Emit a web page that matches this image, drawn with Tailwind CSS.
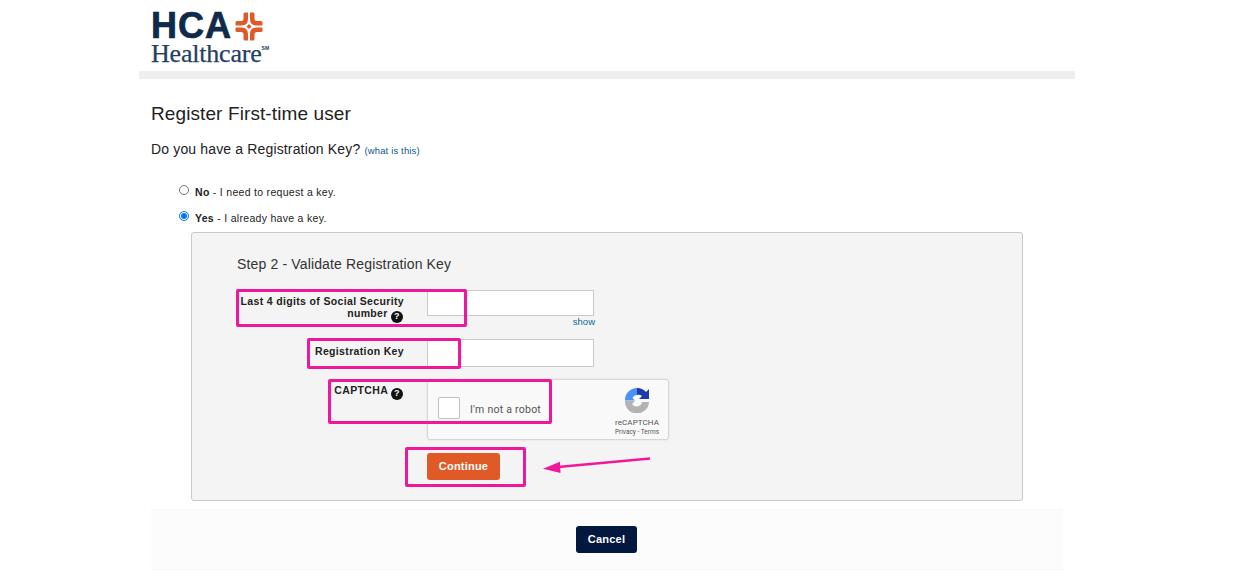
<!DOCTYPE html>
<html lang="en">
<head>
    <meta charset="UTF-8">
    <meta name="viewport" content="width=device-width, initial-scale=1.0">
    <title>Register First-time user - HCA Healthcare</title>
    <script src="https://cdn.jsdelivr.net/npm/@tailwindcss/browser@4"></script>
</head>
<body class="relative bg-white font-['Liberation_Sans',Arial,sans-serif] text-[#222]">
    <div class="ml-[139px] w-[936px]">
        <!-- logo -->
        <header class="h-[71px] pl-3 pt-[9px]">
            <div class="flex items-start h-[34px]">
                <span class="font-bold text-[36px] leading-[34px] tracking-[1px] text-[#0f2a4a] [-webkit-text-stroke:0.7px_#0f2a4a]">HCA</span>
                <svg class="ml-[3px] mt-[3px]" width="28" height="29" viewBox="0 0 28 29" fill="#e0592a">
                    <path d="M8.500 2a1.500 1.500 0 0 1 1.500-1.500h3V7Q13 13.500 6.500 13.500H0.500V10.500a1.500 1.500 0 0 1 1.500-1.500H6Q8.500 9 8.500 6.500z"/>
                    <path d="M8.500 2a1.500 1.500 0 0 1 1.500-1.500h3V7Q13 13.500 6.500 13.500H0.500V10.500a1.500 1.500 0 0 1 1.500-1.500H6Q8.500 9 8.500 6.500z" transform="matrix(-1 0 0 1 28 0)"/>
                    <path d="M8.500 2a1.500 1.500 0 0 1 1.500-1.500h3V7Q13 13.500 6.500 13.500H0.500V10.500a1.500 1.500 0 0 1 1.500-1.500H6Q8.500 9 8.500 6.500z" transform="matrix(1 0 0 -1 0 29)"/>
                    <path d="M8.500 2a1.500 1.500 0 0 1 1.500-1.500h3V7Q13 13.500 6.500 13.500H0.500V10.500a1.500 1.500 0 0 1 1.500-1.500H6Q8.500 9 8.500 6.500z" transform="matrix(-1 0 0 -1 28 29)"/>
                    <path d="M14 12l2.500 2.500-2.500 2.500-2.500-2.500z"/>
                </svg>
            </div>
            <div class="flex items-start">
                <span class="font-['Liberation_Serif',serif] text-[26px] leading-[22px] tracking-[-0.2px] text-[#26405f] [-webkit-text-stroke:0.25px_#26405f]">Healthcare</span>
                <span class="text-[5px] leading-[8px] font-bold text-[#26405f] mt-[1px]">SM</span>
            </div>
        </header>
        <div class="h-2 bg-[#eeeeee]"></div>

        <main class="pl-3 pr-3">
            <h1 class="mt-[23px] text-[19px] leading-[24px] tracking-[0.1px] text-[#222]">Register First-time user</h1>
            <p class="mt-[13px] text-[14px] leading-[20px] tracking-[0.15px]">Do you have a Registration Key? <a href="#" class="text-[9.5px] text-[#0b5a8f]">(what is this)</a></p>

            <div class="mt-[23px] ml-[28px] text-[10.500px] tracking-[0.3px]">
                <label class="flex items-center h-[18px]">
                    <input type="radio" name="key" class="w-[10px] h-[10px] m-0 accent-[#0075ff] mb-[6px]">
                    <span class="ml-[6px]"><b class="font-bold">No</b> - I need to request a key.</span>
                </label>
                <label class="flex items-center h-[18px] mt-[8px]">
                    <input type="radio" name="key" checked class="w-[10px] h-[10px] m-0 accent-[#0075ff] mb-[6px]">
                    <span class="ml-[6px]"><b class="font-bold">Yes</b> - I already have a key.</span>
                </label>
            </div>

            <section class="mt-1 ml-10 w-[832px] h-[269px] bg-[#f4f4f4] border border-[#c8c8c8] rounded-[3px] pt-[21px] pl-[45px]">
                <h2 class="text-[14px] leading-[20px] tracking-[0.15px] text-[#333]">Step 2 - Validate Registration Key</h2>

                <form class="mt-4">
                    <div class="flex items-start">
                        <label class="w-[167px] text-right text-[10.500px] leading-[12px] font-bold tracking-[0.35px] pt-[5px] text-[#222]">
                            Last 4 digits of Social Security<br>number
                            <span class="inline-flex items-center justify-center w-[12px] h-[12px] mr-[1px] rounded-full bg-[#111] text-white text-[9px] font-bold leading-none align-[-2px]">?</span>
                        </label>
                        <div class="ml-[23px] w-[167px]">
                            <input type="text" class="block w-full h-[26px] bg-white border border-[#c9c9c9]">
                            <a href="#" class="block text-right text-[9.500px] leading-[12px] -mr-[1px] text-[#0b6a9c]">show</a>
                        </div>
                    </div>

                    <div class="flex items-start mt-[11px]">
                        <label class="w-[167px] text-right text-[10.500px] leading-[12px] font-bold tracking-[0.35px] pt-[6px]">Registration Key</label>
                        <input type="text" class="ml-[23px] w-[167px] h-[28px] bg-white border border-[#c9c9c9]">
                    </div>

                    <div class="flex items-start mt-3">
                        <label class="w-[167px] text-right text-[10.500px] leading-[12px] font-bold tracking-[0.35px] pt-[5px]">
                            CAPTCHA
                            <span class="inline-flex items-center justify-center w-[12px] h-[12px] mr-[1px] rounded-full bg-[#111] text-white text-[9px] font-bold leading-none align-[-2px]">?</span>
                        </label>
                        <!-- recaptcha box -->
                        <div class="ml-[23px] w-[242px] h-[61px] flex bg-[#f9f9f9] border border-[#d6d6d6] rounded-[3px] shadow-[0_0_3px_rgba(0,0,0,0.08)] font-['Roboto',sans-serif]">
                            <div class="w-[22px] h-[22px] ml-[10px] mt-[17px] bg-white border border-[#c1c1c1] rounded-[2px]"></div>
                            <span class="ml-[10px] mt-[23px] text-[10.500px] leading-[14px] tracking-[0.25px] text-[#555]">I'm not a robot</span>
                            <div class="ml-auto w-[56px] mr-[3px] flex flex-col items-center pt-[7px]">
                                <svg width="26" height="26" viewBox="0 0 26 26">
                                    <path d="M1 13A12 12 0 0 1 13 1V8A5 5 0 0 0 8.500 11L11 13.500H1Z" fill="#4a90f5"/>
                                    <path d="M13 1A12 12 0 0 1 22 5L25 2V12H15L18 9A6 6 0 0 0 13 8Z" fill="#1c3aa9"/>
                                    <path d="M1 14H11L8 17A5.500 5.500 0 0 0 18 15H25A12 12 0 0 1 1 14Z" fill="#b3b3b3"/>
                                </svg>
                                <span class="mt-1 text-[8px] leading-[11px] tracking-[0.1px] text-[#555]">reCAPTCHA</span>
                                <span class="text-[6.500px] leading-[9px] text-[#555] whitespace-nowrap">Privacy - Terms</span>
                            </div>
                        </div>
                    </div>

                    <button type="button" class="block ml-[190px] mt-[13px] w-[73px] h-[27px] bg-[#e05a28] rounded-[3px] text-white text-[11px] font-bold tracking-[0.2px]">Continue</button>
                </form>
            </section>

            <footer class="mt-2 h-[61px] flex items-center justify-center bg-[#fcfcfc] border-y border-[#f6f6f6]">
                <button type="button" class="w-[61px] h-[27px] -ml-[1px] bg-[#03183f] rounded-[3px] text-white text-[11px] font-bold tracking-[0.2px]">Cancel</button>
            </footer>
        </main>
    </div>

    <!-- pink annotations drawn over the screenshot -->
    <div class="absolute left-[236px] top-[289px] w-[231px] h-[38px] border-[3px] border-[#f0189a] rounded-[2px]"></div>
    <div class="absolute left-[307px] top-[338px] w-[154px] h-[31px] border-[3px] border-[#f0189a] rounded-[2px]"></div>
    <div class="absolute left-[328px] top-[379px] w-[224px] h-[45px] border-[3px] border-[#f0189a] rounded-[2px]"></div>
    <div class="absolute left-[405px] top-[447px] w-[121px] h-[40px] border-[3px] border-[#f0189a] rounded-[2px]"></div>
    <svg class="absolute left-[540px] top-[455px]" width="114" height="20" viewBox="0 0 114 20">
        <path d="M110 3.500L18 12" stroke="#f0189a" stroke-width="2.500"/>
        <path d="M3 13.700L20 6.700 20.500 18z" fill="#f0189a"/>
    </svg>
</body>
</html>
